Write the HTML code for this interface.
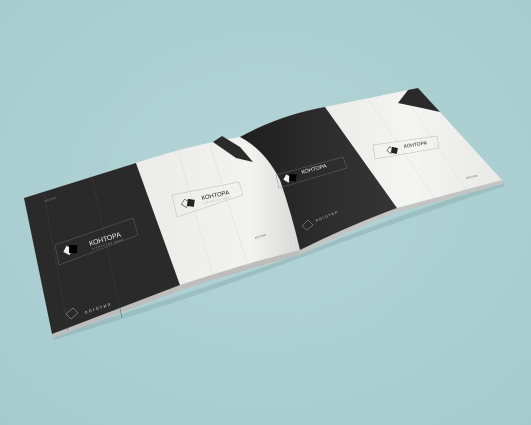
<!DOCTYPE html>
<html><head><meta charset="utf-8"><style>
html,body{margin:0;padding:0;width:531px;height:425px;overflow:hidden;background:#add0d3}
svg{display:block}
text{font-family:"Liberation Sans",sans-serif}
</style></head><body>
<svg width="531" height="425" viewBox="0 0 531 425" xmlns="http://www.w3.org/2000/svg">
<defs>
<radialGradient id="bg" cx="0.5" cy="0.45" r="0.75">
<stop offset="0" stop-color="#b4d5d8"/><stop offset="1" stop-color="#a5cacd"/></radialGradient>
<linearGradient id="wl" x1="0" y1="0" x2="1" y2="0">
<stop offset="0" stop-color="#ebebe8"/><stop offset="0.7" stop-color="#f2f2f0"/><stop offset="1" stop-color="#d8d8d6"/></linearGradient>
<linearGradient id="dr" x1="0" y1="0" x2="1" y2="0">
<stop offset="0" stop-color="#1e1e1e"/><stop offset="0.5" stop-color="#2c2c2c"/><stop offset="1" stop-color="#353535"/></linearGradient>
<linearGradient id="wr" x1="0" y1="0" x2="1" y2="0">
<stop offset="0" stop-color="#ecece9"/><stop offset="0.5" stop-color="#f4f4f2"/><stop offset="1" stop-color="#e8e8e5"/></linearGradient>
</defs>
<rect width="531" height="425" fill="url(#bg)"/>
<path d="M52,336 Q200,290 300,254 Q400,214 503,182 L505,186 Q400,220 300,258 Q200,296 54,340Z" fill="#8fb2b5" opacity="0.6"/>
<path d="M52,334 L180,285 Q250,262 300,250 L300,255 Q250,268 181,290 L53,338Z" fill="#bdbdbb"/>
<path d="M300,250 Q350,225 397,208 L502,180 L503,184 L398,212 Q350,230 300,255Z" fill="#c4c4c2"/>
<path d="M24,198 L136,163 L180,285 L52,334Z" fill="#2a2a2a"/>
<path d="M136,163 Q190,145 240,137 Q265,150 280,180 Q292,215 300,250 Q250,262 180,285Z" fill="url(#wl)"/>
<path d="M240,137 Q280,115 325,107 L397,208 Q350,225 300,250 Q292,215 280,180 Q265,150 240,137Z" fill="url(#dr)"/>
<path d="M325,107 L418,88 L502,180 L397,208Z" fill="url(#wr)"/>
<g stroke="#444" stroke-width="0.4" fill="none">
<line x1="92" y1="177" x2="122" y2="318"/><line x1="44" y1="195" x2="68" y2="330"/>
</g>
<g stroke="#d6d6d4" stroke-width="0.4" fill="none">
<line x1="178" y1="150" x2="213" y2="276"/><line x1="210" y1="145" x2="248" y2="266"/>
<line x1="368" y1="98" x2="434" y2="198"/><line x1="402" y1="92" x2="466" y2="190"/>
</g>
<path d="M213,142 L222,136 L240,147 L253,162 L236,158Z" fill="#2a2a2a"/>
<path d="M398,103 L408,90 L418,88 L440,112 L422,108Z" fill="#2a2a2a"/>
<g fill="none" stroke-width="0.4">
<path d="M55,245 L133,218 L138,235 L59,265Z" stroke="#777"/>
<path d="M172,195 L239,182 L243,195 L177,217Z" stroke="#aaa"/>
<path d="M276,175 L343,157 L347,168 L279,188Z" stroke="#777"/>
<path d="M373,145 L437,136 L439,148 L375,159Z" stroke="#aaa"/>
</g>
<g transform="translate(70,252) rotate(-18)"><rect x="-6" y="-4" width="7" height="7" fill="#eee" transform="rotate(45)"/><rect x="-1" y="-7" width="8" height="8" fill="#000" transform="rotate(20)"/></g>
<g transform="translate(188,205) rotate(-12)"><rect x="-6" y="-3" width="6" height="6" fill="none" stroke="#333" stroke-width="0.5" transform="rotate(45)"/><rect x="-1" y="-6" width="7" height="7" fill="#222" transform="rotate(20)"/></g>
<g transform="translate(290,180) rotate(-15)"><rect x="-6" y="-3" width="6" height="6" fill="#eee" transform="rotate(45)"/><rect x="-1" y="-6" width="7" height="7" fill="#000" transform="rotate(20)"/></g>
<g transform="translate(392,152) rotate(-8)"><rect x="-5" y="-3" width="5" height="5" fill="none" stroke="#333" stroke-width="0.5" transform="rotate(45)"/><rect x="-1" y="-5" width="6" height="6" fill="#222" transform="rotate(20)"/></g>
<text x="90" y="246" font-size="7" fill="#eee" transform="rotate(-17 90 246)">КОНТОРА</text>
<text x="92" y="250" font-size="2.5" letter-spacing="0.8" fill="#aaa" transform="rotate(-17 92 250)">АГЕНТСТВО МЕНТ</text>
<text x="202" y="200" font-size="6" fill="#222" transform="rotate(-12 202 200)">КОНТОРА</text>
<text x="203" y="204" font-size="2.2" letter-spacing="0.7" fill="#999" transform="rotate(-12 203 204)">АГЕНТСТВО МЕНТ</text>
<text x="302" y="174" font-size="5.5" fill="#eee" transform="rotate(-15 302 174)">КОНТОРА</text>
<text x="404" y="148" font-size="5" fill="#222" transform="rotate(-9 404 148)">КОНТОРА</text>
<text x="85" y="314" font-size="5" letter-spacing="1.5" fill="#ccc" transform="rotate(-18 85 314)">логотип</text>
<path d="M66,314 L73,308 L78,313 L71,319Z" fill="none" stroke="#bbb" stroke-width="0.5"/>
<text x="316" y="222" font-size="4.5" letter-spacing="1.2" fill="#bbb" transform="rotate(-22 316 222)">логотип</text>
<path d="M302,226 L308,220 L313,225 L307,230Z" fill="none" stroke="#aaa" stroke-width="0.5"/>
<text x="45" y="202" font-size="2.5" fill="#888" transform="rotate(-17 45 202)">ЛОГОТИП</text>
<text x="255" y="239" font-size="2.5" fill="#555" transform="rotate(-17 255 239)">ЛОГОТИП</text>
<text x="466" y="179" font-size="2.5" fill="#555" transform="rotate(-12 466 179)">ЛОГОТИП</text>
</svg>
</body></html>
